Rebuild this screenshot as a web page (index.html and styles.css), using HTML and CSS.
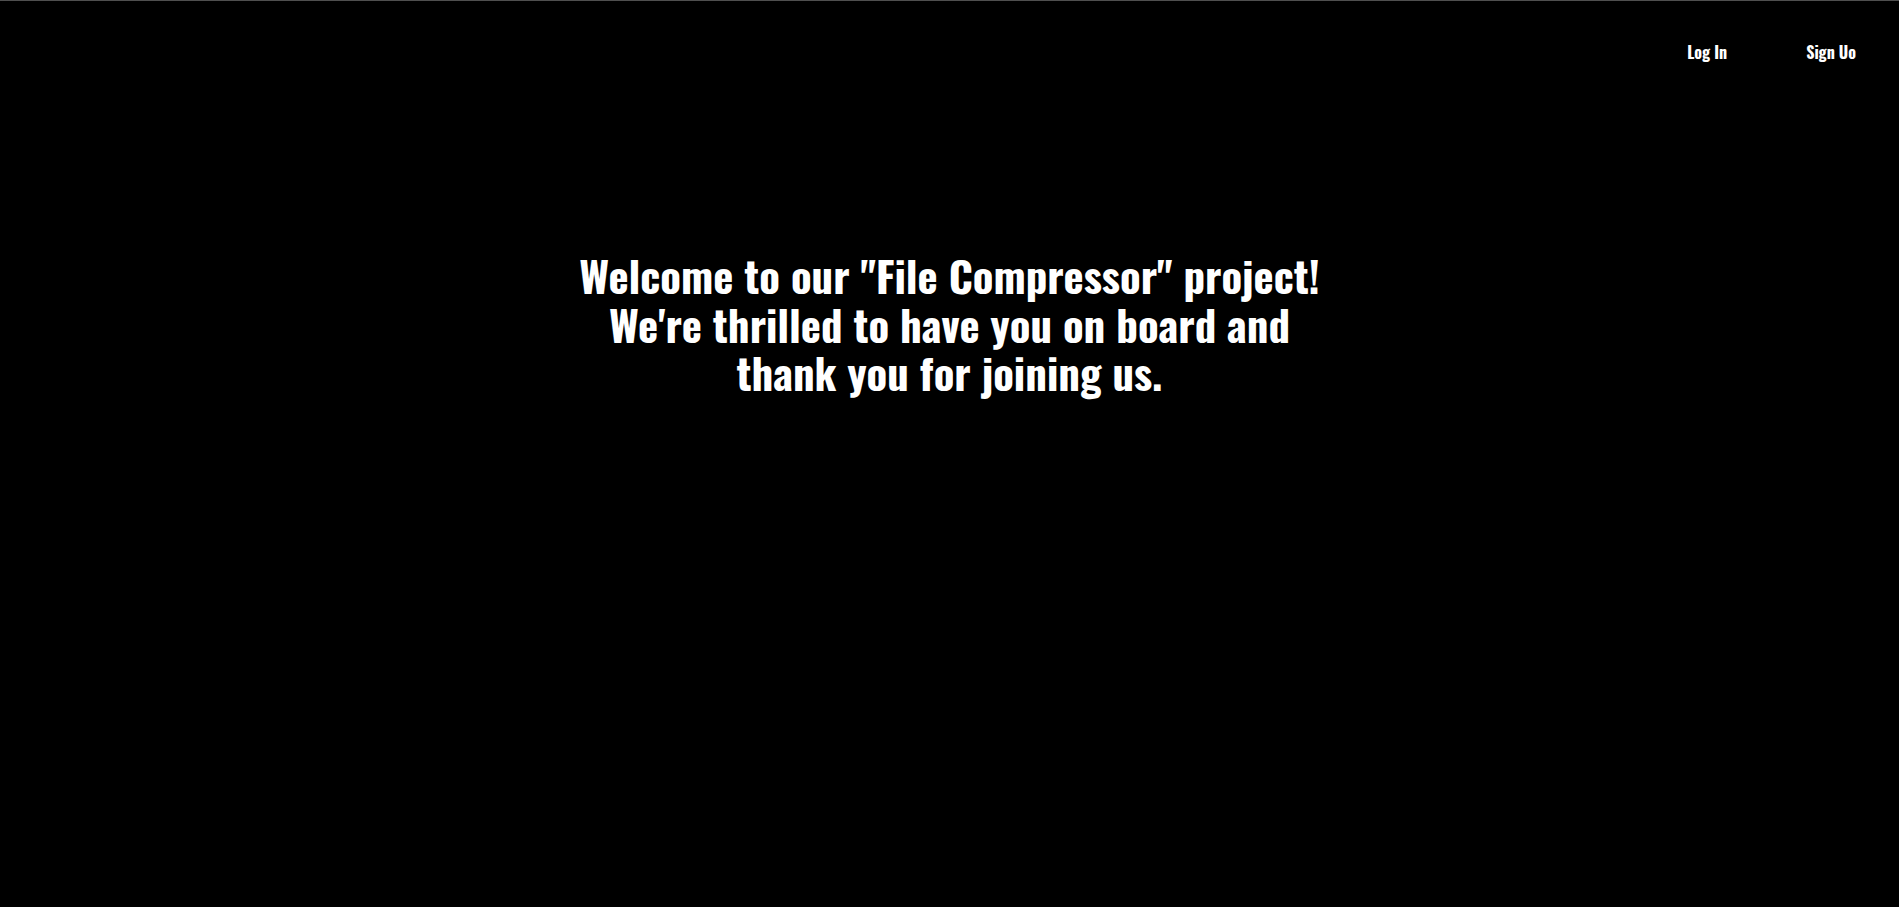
FILE: index.html
```html
<!DOCTYPE html>
<html lang="en">
<head>
<meta charset="utf-8">
<title>File Compressor</title>
<link rel="stylesheet" href="styles.css">
</head>
<body>
<div class="page">
  <nav class="nav">
    <a class="nav-link" href="#">Log In</a>
    <a class="nav-link" href="#">Sign Uo</a>
  </nav>
  <main class="hero">
    <h1 class="hero-title">Welcome to our "File Compressor" project!<br>We're thrilled to have you on board and<br>thank you for joining us.</h1>
  </main>
</div>
</body>
</html>
```
FILE: styles.css
```css
html, body {
  margin: 0;
  padding: 0;
  background: #000;
  height: 100%;
}
body {
  font-family: "Oswald", "Roboto", sans-serif;
  color: #fff;
}
.page {
  min-height: 100%;
  box-sizing: border-box;
  border-top: 1px solid #4f4f4f;
  display: flex;
  flex-direction: column;
}
.nav {
  display: flex;
  justify-content: flex-end;
  gap: 79px;
  padding: 39px 43px 0 0;
}
.nav-link {
  color: #fff;
  text-decoration: none;
  font-size: 16px;
  font-weight: 700;
}
.hero {
  display: flex;
  justify-content: center;
  padding-top: 187px;
}
.hero-title {
  margin: 0;
  font-size: 42.8px;
  font-weight: 700;
  line-height: 48.5px;
  text-align: center;
}
```
